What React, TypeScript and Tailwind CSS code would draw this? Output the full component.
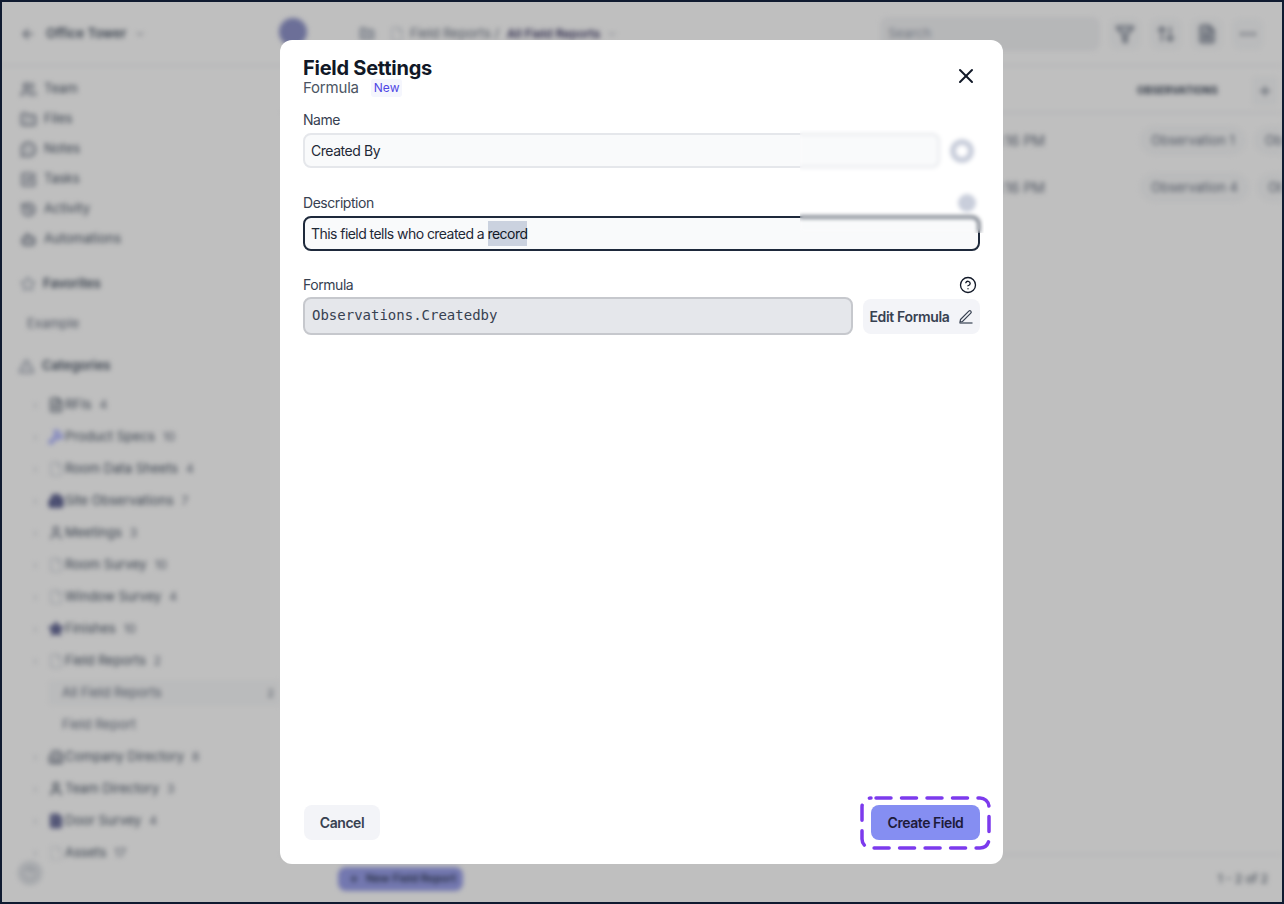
import {
  ArrowLeft,
  ArrowUpDown,
  Bot,
  Building2,
  CheckSquare,
  ChevronDown,
  ChevronRight,
  CircleHelp,
  Ellipsis,
  File,
  FileText,
  Filter,
  Folder,
  Hammer,
  History,
  MessageCircle,
  Plus,
  Star,
  Triangle,
  User,
  Users,
  X,
} from "lucide-react";
import type { FC, ReactNode } from "react";

const navItems = [
  { label: "Team", icon: Users },
  { label: "Files", icon: Folder },
  { label: "Notes", icon: MessageCircle },
  { label: "Tasks", icon: CheckSquare },
  { label: "Activity", icon: History },
  { label: "Automations", icon: Bot },
];

const categoriesTop = [
  { label: "RFIs", count: "4", icon: FileText, tone: "text-gray-600" },
  { label: "Product Specs", count: "10", icon: Hammer, tone: "text-indigo-400" },
  { label: "Room Data Sheets", count: "4", icon: File, tone: "text-gray-300" },
  { label: "Site Observations", count: "7", icon: Building2, tone: "text-[#4a4f80] fill-[#6b6f9e]" },
  { label: "Meetings", count: "3", icon: User, tone: "text-gray-500" },
  { label: "Room Survey", count: "10", icon: File, tone: "text-gray-300" },
  { label: "Window Survey", count: "4", icon: File, tone: "text-gray-300" },
  { label: "Finishes", count: "10", icon: Star, tone: "text-[#4a4f80] fill-[#6b6f9e]" },
  { label: "Field Reports", count: "2", icon: File, tone: "text-gray-300" },
];

const categoriesBottom = [
  { label: "Company Directory", count: "8", icon: Building2, tone: "text-gray-500" },
  { label: "Team Directory", count: "3", icon: User, tone: "text-gray-600" },
  { label: "Door Survey", count: "4", icon: FileText, tone: "text-[#4a4f80] fill-[#8a8db5]" },
  { label: "Assets", count: "17", icon: File, tone: "text-gray-200" },
];

const CategoryRow: FC<{ item: (typeof categoriesTop)[number] }> = ({ item }) => {
  const Icon = item.icon;
  return (
    <div className="flex h-8 items-center pl-[29px]">
      <ChevronRight className="h-[9px] w-[9px] text-gray-400" />
      <Icon className={`ml-[8px] h-4 w-4 shrink-0 ${item.tone}`} />
      <span className="ml-[1px] text-[13px] text-gray-600">{item.label}</span>
      <span className="ml-2 text-[12px] text-gray-500">{item.count}</span>
    </div>
  );
};

const Sidebar: FC = () => (
  <aside className="flex w-[278px] shrink-0 flex-col">
    <div className="flex h-[64px] items-center gap-2 border-b border-gray-200 pl-[18px]">
      <ArrowLeft className="h-4 w-4 text-gray-500" />
      <span className="ml-[2px] text-[13px] font-semibold text-gray-600">Office Tower</span>
      <ChevronDown className="h-3 w-3 text-gray-500" />
    </div>
    <nav className="flex flex-col pt-[8px]">
      {navItems.map(({ label, icon: Icon }) => (
        <div key={label} className="flex h-[30px] items-center gap-[7px] pl-[18px]">
          <Icon className="h-[17px] w-[17px] fill-gray-200 text-gray-500" />
          <span className="text-[13px] text-gray-600">{label}</span>
        </div>
      ))}
    </nav>
    <div className="mt-[15px] flex h-[30px] items-center gap-[7px] pl-[18px]">
      <Star className="h-4 w-4 text-gray-400" />
      <span className="text-[13px] font-semibold text-gray-600">Favorites</span>
    </div>
    <div className="mt-[10px] flex h-[30px] items-center pl-[25px] text-[13px] text-gray-500">
      Example
    </div>
    <div className="mt-[12px] flex h-[30px] items-center gap-[7px] pl-[16px]">
      <Triangle className="h-[17px] w-[17px] fill-gray-200 text-gray-400" />
      <span className="text-[13px] font-semibold text-gray-600">Categories</span>
    </div>
    <div className="mt-[8px] flex flex-col">
      {categoriesTop.map((item) => (
        <CategoryRow key={item.label} item={item} />
      ))}
      <div className="my-[3px] ml-[46px] flex h-[26px] items-center justify-between rounded-l bg-gray-50 pl-[14px] pr-[6px] text-[13px] text-gray-500">
        All Field Reports
        <span className="text-[11px]">2</span>
      </div>
      <div className="ml-[46px] flex h-8 items-center pl-[14px] text-[13px] text-gray-500">
        Field Report
      </div>
      {categoriesBottom.map((item) => (
        <CategoryRow key={item.label} item={item} />
      ))}
    </div>
  </aside>
);

const HeadIcon: FC<{ children: ReactNode }> = ({ children }) => (
  <div className="flex h-[32px] w-[32px] items-center justify-center rounded-lg bg-gray-50 text-gray-500">
    {children}
  </div>
);

const Chip: FC<{ children: ReactNode; className?: string }> = ({ children, className }) => (
  <span
    className={`shrink-0 whitespace-nowrap rounded-full border border-gray-100 bg-gray-50 px-[10px] py-[4px] text-[13px] text-gray-500 ${className ?? ""}`}
  >
    {children}
  </span>
);

const MainPanel: FC = () => (
  <main className="flex min-w-0 flex-1 flex-col overflow-hidden">
    <header className="flex h-[64px] shrink-0 items-center border-b border-gray-200 pr-[18px]">
      <Folder className="ml-[79px] h-4 w-4 shrink-0 fill-gray-300 text-gray-400" />
      <File className="ml-[14px] h-4 w-4 shrink-0 text-gray-300" />
      <span className="ml-[5px] text-[13px] text-gray-500">Field Reports /</span>
      <span className="ml-[8px] text-xs font-medium text-indigo-950">All Field Reports</span>
      <ChevronDown className="ml-[6px] h-3 w-3 text-gray-400" />
      <div className="ml-auto flex h-[34px] w-[220px] items-center rounded-lg bg-gray-100 px-2 text-[13px] text-gray-400">
        Search
      </div>
      <div className="ml-[9px] flex gap-[9px]">
        <HeadIcon>
          <Filter className="h-5 w-5 fill-gray-300" />
        </HeadIcon>
        <HeadIcon>
          <ArrowUpDown className="h-5 w-5" />
        </HeadIcon>
        <HeadIcon>
          <FileText className="h-5 w-5 fill-gray-300" />
        </HeadIcon>
        <HeadIcon>
          <Ellipsis className="h-5 w-5" />
        </HeadIcon>
      </div>
    </header>
    <div className="flex h-[47px] shrink-0 items-center justify-end border-b border-gray-200 pr-[4px] pt-[3px]">
      <span className="mr-[34px] text-[10px] font-bold tracking-wide text-gray-700">OBSERVATIONS</span>
      <div className="flex h-[30px] w-[26px] items-center justify-center rounded bg-gray-50">
        <Plus className="h-4 w-4 text-gray-500" />
      </div>
    </div>
    <div className="flex shrink-0 flex-col pt-[4px]">
      {[
        ["Observation 1", "Observation 2"],
        ["Observation 4", "Observation 5"],
      ].map((chips) => (
        <div key={chips[0]} className="flex h-[47px] items-center pl-[712px] text-[14px] text-gray-500">
          <span className="w-[148px] shrink-0">4:16 PM</span>
          <Chip>{chips[0]}</Chip>
          <Chip className="ml-[8px]">{chips[1]}</Chip>
        </div>
      ))}
    </div>
    <footer className="mt-auto flex h-[48px] shrink-0 items-center justify-between border-t border-gray-200 pl-[58px] pr-[14px]">
      <div className="flex h-[24px] w-[125px] items-center gap-[6px] whitespace-nowrap rounded-lg bg-[#9aa0eb] pl-[10px] text-[11px] font-medium text-gray-800">
        <Plus className="h-3 w-3" />
        New Field Report
      </div>
      <span className="text-xs text-gray-600">1 - 2 of 2</span>
    </footer>
  </main>
);

const FieldSettings: FC = () => (
  <section className="relative ml-[-1px] flex h-[824px] w-[723px] flex-col rounded-xl bg-white px-[23px] pb-[24px] pt-[17px] font-['Inter',sans-serif]">
    <div className="flex items-start justify-between">
      <div className="flex flex-col">
        <h2 className="text-[20px] font-bold leading-[22px] tracking-[-0.25px] text-[#111827]">Field Settings</h2>
        <div className="flex h-[18px] items-center">
          <span className="text-[15px] tracking-[-0.2px] text-[#4b5563]">Formula</span>
          <span className="ml-[12px] rounded-[3px] bg-[#f5f6fd] px-[3px] text-[12px] leading-[18px] text-[#4f46e5]">New</span>
        </div>
      </div>
      <X className="mr-[2px] mt-[7px] h-[24px] w-[24px] text-[#111827]" strokeWidth={2} />
    </div>

    <label className="mt-[13px] text-[14px] leading-[20px] tracking-[-0.45px] text-[#374151]">Name</label>
    <div className="mt-[3px] flex items-center gap-[10px]">
      <div className="flex h-[35px] flex-1 items-center rounded-lg border-2 border-[#e5e7eb] bg-[#f9fafb] pl-[6px] text-[14px] tracking-[-0.45px] text-[#1f2937]">
        Created By
      </div>
      <div className="mr-[6px] flex h-[24px] w-[24px] items-center justify-center rounded-full border-[6px] border-[#c9cedb] bg-white" />
    </div>

    <div className="mt-[25px] flex items-center justify-between">
      <label className="text-[14px] leading-[20px] tracking-[-0.45px] text-[#374151]">Description</label>
      <div className="mr-[4px] h-[18px] w-[18px] rounded-full bg-[#c9cedb]" />
    </div>
    <div className="mt-[3px] flex h-[35px] items-center rounded-lg border-2 border-[#1e293b] bg-[#f9fafb] pl-[6px] text-[14px] tracking-[-0.55px] text-[#1f2937]">
      This field tells who created a&nbsp;
      <span className="bg-[#cbd2df] py-[2px] text-[#111827]">record</span>
    </div>

    <div className="mt-[24px] flex items-center justify-between">
      <label className="text-[14px] leading-[20px] tracking-[-0.45px] text-[#374151]">Formula</label>
      <CircleHelp className="mr-[3px] h-[18px] w-[18px] text-[#111827]" strokeWidth={1.75} />
    </div>
    <div className="mt-[2px] flex items-center gap-[10px]">
      <div className="flex h-[38px] flex-1 items-center rounded-lg border-2 border-[#c6c8cd] bg-[#e5e7eb] pb-[1px] pl-[7px] font-['DejaVu_Sans_Mono',monospace] text-[14px] text-[#374151]">
        Observations.Createdby
      </div>
      <button className="flex h-[35px] w-[117px] items-center justify-center gap-[8px] rounded-lg bg-[#f3f4f8] text-[14px] font-semibold tracking-[-0.35px] text-[#374151]">
        Edit Formula
        <svg viewBox="0 0 16 16" fill="none" stroke="currentColor" strokeWidth="1.2" className="h-4 w-4">
          <path d="M2.5 11.5 10.8 3.2a1.4 1.4 0 0 1 2 2L4.5 13.5l-2.5.5z" />
          <path d="M1.5 15h13" />
        </svg>
      </button>
    </div>

    <div className="mt-auto flex items-center justify-between">
      <button className="ml-[1px] flex h-[35px] w-[76px] items-center justify-center rounded-lg bg-[#f3f4f8] text-[14px] font-semibold tracking-[-0.45px] text-[#374151]">
        Cancel
      </button>
      <button className="flex h-[35px] w-[109px] items-center justify-center rounded-lg bg-[#858ef2] text-[14px] font-semibold tracking-[-0.45px] text-[#1e1b3a]">
        Create Field
      </button>
    </div>

    {/* focus ring drawn round the primary button */}
    <svg className="absolute bottom-[14px] right-[12px] h-[54px] w-[131px]" viewBox="0 0 131 54" fill="none">
      <rect
        x="2"
        y="2"
        width="127"
        height="50"
        rx="9"
        stroke="#7c3aed"
        strokeWidth="3.5"
        strokeDasharray="15 10.5"
        strokeDashoffset="-5"
        strokeLinecap="round"
      />
    </svg>

    {/* smeared patch over the right end of the name and description fields */}
    <div className="absolute left-[520px] top-[90px] h-[103px] w-[184px] backdrop-blur-[2px]" />
  </section>
);

const App: FC = () => (
  <div className="relative h-[904px] w-[1284px] overflow-hidden border-2 border-[#0f1a30] bg-white font-['Inter',sans-serif]">
    <div className="flex h-full blur-[2.5px]">
      <Sidebar />
      <MainPanel />
      <div className="absolute left-[277px] top-[16px] h-[28px] w-[28px] rounded-full bg-[#9095cb]" />
      <div className="absolute bottom-[17px] left-[16px] flex h-[24px] w-[24px] items-center justify-center rounded-full border-2 border-gray-300 bg-gray-50">
        <CircleHelp className="h-4 w-4 text-gray-400" />
      </div>
    </div>
    <div className="absolute inset-0 flex items-center justify-center bg-black/25">
      <FieldSettings />
    </div>
  </div>
);

export default App;
